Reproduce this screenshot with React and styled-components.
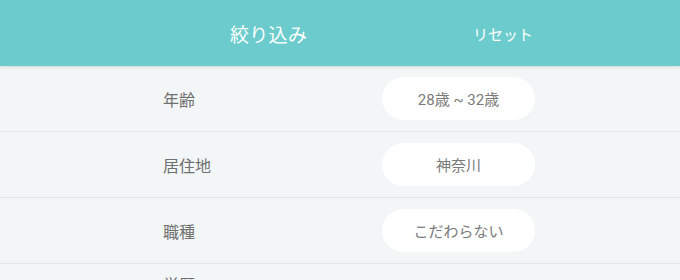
import React from 'react';
import styled, { createGlobalStyle } from 'styled-components';

const Global = createGlobalStyle`
  html, body {
    margin: 0;
    padding: 0;
    background: #f3f6f7;
    font-family: Roboto, "Noto Sans CJK JP", "Noto Sans", sans-serif;
    overflow: hidden;
  }
`;

const Page = styled.div`
  width: 680px;
  height: 280px;
  overflow: hidden;
  background: #f3f6f7;
`;

const Header = styled.header`
  height: 66px;
  background: #6ccccd;
  display: flex;
  align-items: center;
  padding: 0 147px 0 230px;
  box-shadow: 0 1px 3px rgba(0, 0, 0, 0.12);
  position: relative;
  z-index: 1;
`;

const Title = styled.h1`
  margin: 0;
  font-size: 19px;
  font-weight: 400;
  color: #fff;
  letter-spacing: 0.3px;
`;

const Reset = styled.button`
  margin-left: auto;
  border: none;
  background: none;
  padding: 0;
  font-family: inherit;
  font-size: 15px;
  color: #fff;
  cursor: pointer;
`;

const Row = styled.div`
  height: 65px;
  display: flex;
  align-items: ${p => (p.$top ? 'flex-start' : 'center')};
  justify-content: space-between;
  padding: 0 145px 0 163px;
  border-bottom: 1px solid #e2e7e8;
`;

const Label = styled.span`
  font-size: 16px;
  color: #707070;
  padding-top: ${p => (p.$top ? '8px' : '0')};
`;

const Pill = styled.div`
  width: 153px;
  height: 43px;
  border-radius: 22px;
  background: #fff;
  display: flex;
  align-items: center;
  justify-content: center;
  font-size: 15px;
  color: #7a7a7a;
  white-space: pre;
`;

const filters = [
  { label: '年齢', value: '28歳 ~ 32歳' },
  { label: '居住地', value: '神奈川' },
  { label: '職種', value: 'こだわらない' },
];

export default function App() {
  return (
    <Page>
      <Global />
      <Header>
        <Title>絞り込み</Title>
        <Reset>リセット</Reset>
      </Header>
      {filters.map(f => (
        <Row key={f.label}>
          <Label>{f.label}</Label>
          <Pill>{f.value}</Pill>
        </Row>
      ))}
      <Row $top>
        <Label $top>学歴</Label>
      </Row>
    </Page>
  );
}
